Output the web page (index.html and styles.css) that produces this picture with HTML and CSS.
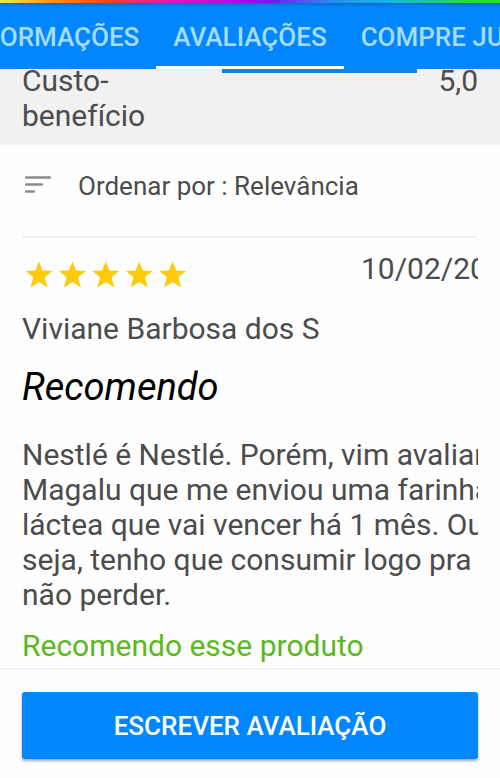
FILE: index.html
```
<!DOCTYPE html>
<html lang="pt-BR">
<head>
  <meta charset="UTF-8">
  <meta name="viewport" content="width=device-width, initial-scale=1">
  <title>Avaliações do produto</title>
  <link rel="stylesheet" href="styles.css">
</head>
<body>
  <header class="header">
    <div class="rainbow"></div>
    <nav class="tabs">
      <a href="#informacoes" class="tab tab-left">INFORMAÇÕES</a>
      <a href="#avaliacoes" class="tab active">AVALIAÇÕES</a>
      <a href="#compre-junto" class="tab">COMPRE JUNTO</a>
    </nav>
    <div class="header-bar"></div>
  </header>

  <main class="content" id="avaliacoes">
    <section class="score">
      <span class="score-label">Custo-<br>benefício</span>
      <span class="score-value">5,0</span>
    </section>

    <button type="button" class="sort">
      <svg class="sort-icon" viewBox="0 0 26 18" aria-hidden="true">
        <path d="M1 1.5h24M1 8.5h16M1 15.5h8" stroke="#8c8c8c" stroke-width="2.4" stroke-linecap="round"/>
      </svg>
      <span>Ordenar por : Relevância</span>
    </button>

    <article class="review">
      <div class="review-top">
        <svg class="stars" viewBox="0 0 162 27" role="img" aria-label="5 de 5 estrelas">
          <defs>
            <path id="star" d="M14 0.5l3.6 9 9.8.5-7.7 6.3 2.8 10.2-8.5-5.4-8.5 5.4 2.8-10.2-7.7-6.3 9.8-.5z"/>
          </defs>
          <g fill="#fdcb0a">
            <use href="#star"/>
            <use href="#star" x="33.4"/>
            <use href="#star" x="66.8"/>
            <use href="#star" x="100.2"/>
            <use href="#star" x="133.6"/>
          </g>
        </svg>
        <time class="date" datetime="2020-02-10">10/02/2020</time>
      </div>
      <p class="author">Viviane Barbosa dos S</p>
      <h2 class="review-title">Recomendo</h2>
      <p class="review-text">Nestlé é Nestlé. Porém, vim avaliar a<br>Magalu que me enviou uma farinha<br>láctea que vai vencer há 1 mês. Ou<br>seja, tenho que consumir logo pra<br>não perder.</p>
      <p class="recommend">Recomendo esse produto</p>
    </article>
  </main>

  <footer class="footer">
    <button type="button" class="write-btn">ESCREVER AVALIAÇÃO</button>
  </footer>
</body>
</html>
```
FILE: styles.css
```
* {
  box-sizing: border-box;
}
body {
  margin: 0;
  min-height: 100vh;
  display: flex;
  flex-direction: column;
  font-family: Roboto, "Liberation Sans", sans-serif;
  font-size: 30px;
  line-height: 35px;
  color: #4c4c4c;
  background-color: #fefefe;
  overflow-x: hidden;
}
p, h2 {
  margin: 0;
}
/* Header with tabs */
.header {
  position: relative;
  z-index: 1;
  background-color: #0086ff;
}
.rainbow {
  height: 3px;
  background: linear-gradient(to right, #f5e663, #f08a24 12%, #e5452f 22%, #d41fb4 34%, #9a12e8 48%, #7a14f0 54%, #2a8cf0 66%, #12b8e0 78%, #22d64c 92%, #2be03c);
}
.tabs {
  display: grid;
  grid-template-columns: minmax(0, 1fr) auto minmax(0, 1fr);
  overflow: hidden;
  background: linear-gradient(#0a6cc8, #0086ff 4px);
}
.tab {
  padding: 17px 17px 11px;
  border-bottom: 3px solid transparent;
  font-size: 26px;
  font-weight: 500;
  color: #a6dcff;
  text-decoration: none;
  white-space: nowrap;
}
.tab-left {
  justify-self: end;
}
.tab.active {
  border-bottom-color: #fff;
}
.header-bar {
  position: absolute;
  top: 100%;
  left: 222px;
  width: 39%;
  height: 4px;
  background-color: #1483dc;
}
/* Score row, scrolled partly under the header */
.score {
  display: flex;
  justify-content: space-between;
  margin-top: -6px;
  padding: 0 22px 12px;
  background-color: #f1f1f1;
}
/* Sorting */
.sort {
  display: flex;
  align-items: center;
  gap: 27px;
  width: calc(100% - 44px);
  margin: 0 22px;
  padding: 24px 0 32px 3px;
  border: none;
  border-bottom: 2px solid #f1f1f1;
  background: none;
  font: inherit;
  font-size: 26px;
  color: inherit;
  cursor: pointer;
}
.sort-icon {
  width: 26px;
  height: 18px;
  margin-bottom: 4px;
}
/* Review */
.content {
  flex: 1;
}
.review {
  margin: 0 22px;
  padding: 13px 0 5px;
  overflow: hidden;
  white-space: nowrap;
}
.review-top {
  display: grid;
  grid-template-columns: 339px minmax(0, 1fr);
}
.stars {
  width: 162px;
  height: 27px;
  margin: 10px 0 0 3px;
}
.author {
  margin-top: 23px;
}
.review-title {
  margin-top: 19px;
  font-size: 38px;
  font-weight: 400;
  font-style: italic;
  line-height: 45px;
  color: #000;
}
.review-text {
  margin-top: 27px;
}
.recommend {
  margin-top: 16px;
  color: #5bb81e;
}
/* Bottom action */
.footer {
  padding: 22px 22px 19px;
  border-top: 2px solid #f5f5f5;
}
.write-btn {
  display: block;
  width: 100%;
  padding: 17px 16px 15px;
  border: none;
  border-radius: 3px;
  background-color: #0086ff;
  box-shadow: 0 2px 3px rgba(0, 0, 0, 0.35);
  font: inherit;
  font-size: 26px;
  font-weight: 500;
  color: #fff;
  cursor: pointer;
}
```
